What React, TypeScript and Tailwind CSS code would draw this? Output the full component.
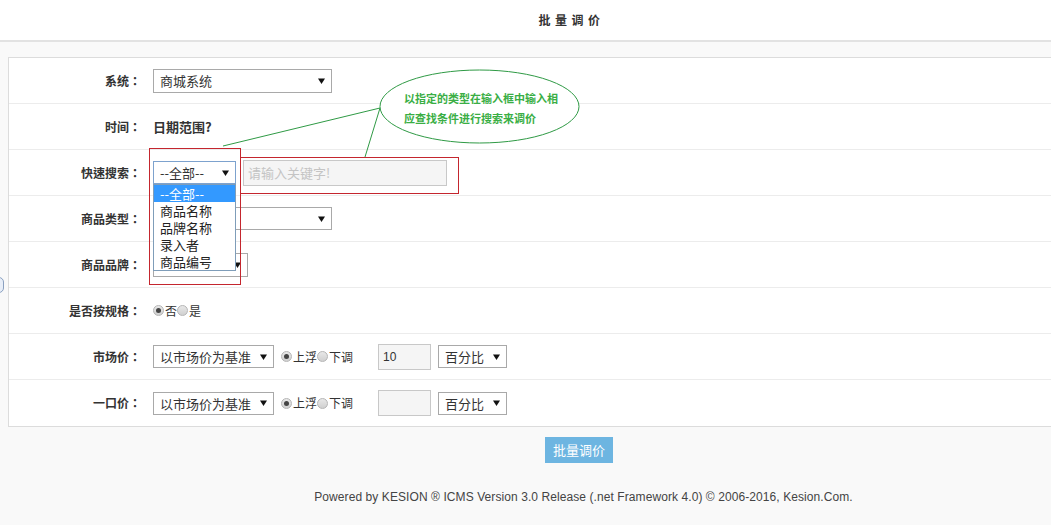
import React from "react";

const cjk = { fontFamily: '"Noto Sans CJK SC", "Noto Sans", sans-serif' };
const labelFont = { fontFamily: '"Noto Sans CJK TC", "Noto Sans CJK SC", sans-serif' };
const latin = { fontFamily: '"Liberation Sans", Arial, sans-serif' };

function Arrow() {
  return (
    <svg width="7" height="6" viewBox="0 0 7 6" className="shrink-0">
      <path d="M0 0.5 H7 L3.5 6 Z" fill="#111" />
    </svg>
  );
}

function FakeSelect({ w, h = 24, text, focus }: { w: string; h?: number; text?: string; focus?: boolean }) {
  return (
    <div
      className={`${w} flex items-center justify-between border bg-white pl-[6px] pr-[6px] text-[13px] text-[#333] ${
        focus ? "border-[#7da2ce]" : "border-[#a9a9a9]"
      }`}
      style={{ height: h }}
    >
      <span className="leading-none">{text}</span>
      <Arrow />
    </div>
  );
}

function Radio({ on }: { on?: boolean }) {
  return (
    <span className="inline-flex h-[11px] w-[11px] items-center justify-center rounded-full border border-[#b5b5b5] bg-gradient-to-b from-[#e8e8e8] to-[#d0d0d0]">
      {on && <span className="h-[5px] w-[5px] rounded-full bg-[#444]" />}
    </span>
  );
}

function Row({ label, children, last }: { label: string; children?: React.ReactNode; last?: boolean }) {
  return (
    <div className={`flex h-[46px] items-center ${last ? "" : "border-b border-[#ececec]"}`}>
      <div className="w-[132px] text-right text-[12px] font-bold text-[#333]" style={labelFont}>
        {label}
      </div>
      <div className="ml-[12px] flex items-center">{children}</div>
    </div>
  );
}

function UpDown() {
  return (
    <div className="ml-[7px] flex items-center text-[12px] text-[#333]">
      <Radio on />
      <span className="ml-[1px]">上浮</span>
      <Radio />
      <span className="ml-[1px]">下调</span>
    </div>
  );
}

export default function App() {
  return (
    <div className="relative h-[525px] w-[1051px] overflow-hidden bg-[#f9f9f9]" style={cjk}>
      {/* page title bar */}
      <div className="flex h-[42px] items-center justify-center border-b-2 border-[#e2e2e2] bg-white">
        <span className="ml-[92px] text-[12px] font-bold tracking-[4.5px] text-[#333]">批量调价</span>
      </div>

      {/* form panel */}
      <div className="ml-[8px] mt-[15px] w-[1060px] border border-[#dcdcdc] bg-white">
        <Row label="系统：">
          <FakeSelect w="w-[179px]" text="商城系统" />
        </Row>
        <Row label="时间：">
          <span className="text-[13px] font-bold text-[#333]">日期范围?</span>
        </Row>
        <Row label="快速搜索：">
          <FakeSelect w="w-[83px]" h={23} text="--全部--" focus />
          <div className="ml-[7px] flex h-[26px] w-[204px] items-center border border-[#c8c8c8] bg-[#f5f5f5] pl-[4px] text-[13px] text-[#c4c4c4]">
            请输入关键字!
          </div>
        </Row>
        <Row label="商品类型：">
          <FakeSelect w="w-[179px]" h={23} />
        </Row>
        <Row label="商品品牌：">
          <FakeSelect w="w-[95px]" />
        </Row>
        <Row label="是否按规格：">
          <div className="flex items-center text-[12px] text-[#333]">
            <Radio on />
            <span className="ml-[1px]">否</span>
            <Radio />
            <span className="ml-[1px]">是</span>
          </div>
        </Row>
        <Row label="市场价：">
          <FakeSelect w="w-[121px]" h={23} text="以市场价为基准" />
          <UpDown />
          <div className="ml-[25px] flex h-[26px] w-[53px] items-center border border-[#c8c8c8] bg-[#f5f5f5] pl-[4px] text-[12px] text-[#333]" style={latin}>
            10
          </div>
          <div className="ml-[7px]">
            <FakeSelect w="w-[69px]" h={23} text="百分比" />
          </div>
        </Row>
        <Row label="一口价：" last>
          <FakeSelect w="w-[121px]" h={23} text="以市场价为基准" />
          <UpDown />
          <div className="ml-[25px] h-[26px] w-[53px] border border-[#c8c8c8] bg-[#f5f5f5]" />
          <div className="ml-[7px]">
            <FakeSelect w="w-[69px]" h={23} text="百分比" />
          </div>
        </Row>
      </div>

      {/* submit */}
      <div className="mt-[10px] flex justify-center">
        <button className="ml-[107px] h-[26px] w-[68px] bg-[#6db5e1] text-[13px] text-white">批量调价</button>
      </div>

      {/* footer */}
      <div className="mt-[25px] flex justify-center">
        <span className="ml-[116px] text-[12px] tracking-[0.08px] text-[#444]" style={latin}>
          Powered by KESION ® ICMS Version 3.0 Release (.net Framework 4.0) © 2006-2016, Kesion.Com.
        </span>
      </div>

      {/* side handle at the left edge */}
      <div className="absolute left-[-6px] top-[277px] h-[16px] w-[10px] rounded-full border border-[#8aa0c0] bg-[#e8eef8]" />

      {/* open option list of the quick-search select */}
      <div className="absolute left-[153px] top-[184px] flex h-[87px] w-[83px] flex-col border border-[#7f9db9] bg-white text-[13px] leading-[17px] text-[#222]">
        <div className="bg-[#3399ff] pl-[6px] text-white">--全部--</div>
        <div className="pl-[6px]">商品名称</div>
        <div className="pl-[6px]">品牌名称</div>
        <div className="pl-[6px]">录入者</div>
        <div className="pl-[6px]">商品编号</div>
      </div>

      {/* callout highlight boxes */}
      <div className="absolute left-[149px] top-[148px] h-[137px] w-[92px] border border-[#c4262e]" />
      <div className="absolute left-[240px] top-[157px] h-[37px] w-[219px] border border-[#c4262e]" />

      {/* callout bubble with leader lines */}
      <svg className="pointer-events-none absolute left-0 top-0" width="1051" height="525">
        <line x1="223" y1="146" x2="380" y2="108" stroke="#2f9a45" strokeWidth="1" />
        <line x1="365" y1="157" x2="380" y2="108" stroke="#2f9a45" strokeWidth="1" />
        <ellipse cx="479.5" cy="106.5" rx="99.5" ry="36.5" fill="white" stroke="#2f9a45" strokeWidth="1" />
      </svg>
      <div className="absolute left-[404px] top-[88px] text-[11px] font-bold leading-[20px] text-[#3aae45]">
        <div>以指定的类型在输入框中输入相</div>
        <div>应查找条件进行搜索来调价</div>
      </div>
    </div>
  );
}
